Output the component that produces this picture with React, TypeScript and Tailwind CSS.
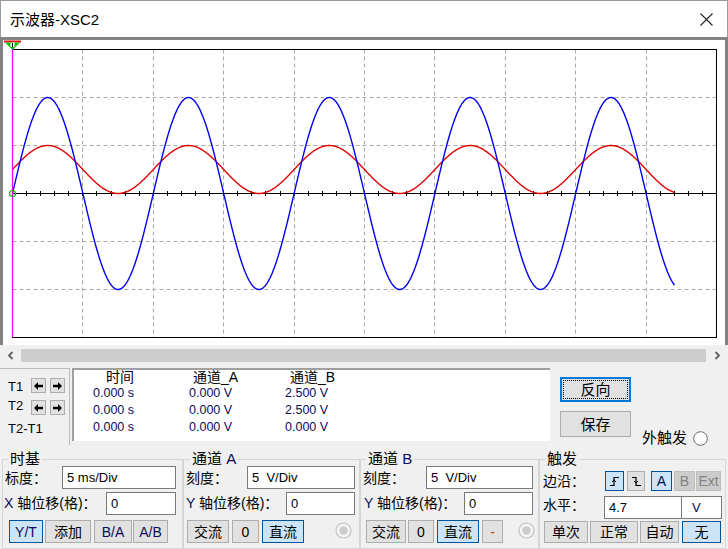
import React from 'react';

// plot geometry, page coordinates
const X0 = 12.5;
const X1 = 716.5;
const Y0 = 49.5;
const Y1 = 337.5;
const CY = 193.5;
const DIVX = 70.4;
const DIVY = 48;
const PERIOD = 140.8;
const XEND = 674.5;

function wave(amp: number, offset: number) {
  const pts: string[] = [];
  for (let x = X0; x <= XEND; x += 0.5) {
    const y = CY - offset - amp * Math.sin((2 * Math.PI * (x - X0)) / PERIOD);
    pts.push(`${x.toFixed(1)},${y.toFixed(1)}`);
  }
  return pts.join(' ');
}

function Plot() {
  const vlines = Array.from({ length: 9 }, (_, i) => Math.round(X0 + (i + 1) * DIVX - 0.5) + 0.5);
  const hlines = [1, 2, 4, 5].map((k) => Y0 + k * DIVY);
  const ticks = Array.from({ length: 51 }, (_, i) => Math.round(X0 + i * (DIVX / 5) - 0.5) + 0.5);
  return (
    <svg width="722" height="305" viewBox="3 40 722 305" className="block">
      {vlines.map((x) => (
        <line key={x} x1={x} y1={Y0} x2={x} y2={Y1} stroke="#a8a8a8" strokeDasharray="4 3" />
      ))}
      {hlines.map((y) => (
        <line key={y} x1={X0} y1={y} x2={X1} y2={y} stroke="#a8a8a8" strokeDasharray="4 3" />
      ))}
      <rect x={X0} y={Y0} width={X1 - X0} height={Y1 - Y0} fill="none" stroke="#000" />
      <line x1={X0} y1={CY} x2={X1} y2={CY} stroke="#000" />
      {ticks.map((x) => (
        <line key={x} x1={x} y1={CY - 2.5} x2={x} y2={CY + 2.5} stroke="#000" />
      ))}
      <polyline points={wave(24, 24)} fill="none" stroke="#e00000" strokeWidth="1.4" />
      <polyline points={wave(96, 0)} fill="none" stroke="#0000f0" strokeWidth="1.4" />
      <line x1={X0} y1={Y0} x2={X0} y2={Y1} stroke="#ff00ff" strokeWidth="1.3" />
      <circle cx={X0} cy={CY} r="3" fill="none" stroke="#00c000" strokeWidth="1.2" />
      {/* cursor marker */}
      <rect x="4" y="40.5" width="17" height="2" fill="#e01010" />
      <polygon points="5,42.5 20,42.5 12.5,50" fill="#10c010" />
      <rect x="10.5" y="42.5" width="4" height="4.5" fill="#fff" />
      <line x1="12.5" y1="43" x2="12.5" y2="47" stroke="#000" />
    </svg>
  );
}

function Btn({ className, sel, dis, children }: { className: string; sel?: boolean; dis?: boolean; children: React.ReactNode }) {
  const tone = sel
    ? 'bg-[#cce4f7] border-[#005499]'
    : dis
      ? 'bg-[#cccccc] border-[#bfbfbf] text-[#838383]'
      : 'bg-[#e1e1e1] border-[#adadad]';
  return <div className={`flex items-center justify-center border text-[14px] leading-none shrink-0 ${tone} ${className}`}>{children}</div>;
}

function Field({ className, children }: { className: string; children: React.ReactNode }) {
  return (
    <div className={`h-[23px] bg-white border border-[#7a7a7a] flex items-center pl-[4px] text-[13px] shrink-0 ${className}`}>{children}</div>
  );
}

function Radio({ off }: { off?: boolean }) {
  return off ? (
    <svg width="17" height="17" viewBox="0 0 17 17" className="shrink-0">
      <circle cx="8.5" cy="8.5" r="7.5" fill="#f4f4f4" stroke="#c2c2c2" strokeWidth="1.2" />
      <circle cx="8.5" cy="8.5" r="4.2" fill="#cccccc" />
    </svg>
  ) : (
    <svg width="15" height="15" viewBox="0 0 15 15" className="shrink-0">
      <circle cx="7.5" cy="7.5" r="6.8" fill="#fff" stroke="#6a6a6a" strokeWidth="1" />
    </svg>
  );
}

function Arrow({ left }: { left?: boolean }) {
  return (
    <div className="w-[15px] h-[15px] bg-[#e1e1e1] border border-[#adadad] flex items-center justify-center">
      <svg width="9" height="8" viewBox="0 0 9 8" className={left ? '' : 'rotate-180'}>
        <path d="M0 4 L4 0 V2.8 H9 V5.2 H4 V8 Z" fill="#000" />
      </svg>
    </div>
  );
}

function Chevron({ right }: { right?: boolean }) {
  return (
    <svg width="7" height="9" viewBox="0 0 7 9" className={right ? 'rotate-180' : ''}>
      <path d="M5.5 1 L2 4.5 L5.5 8" fill="none" stroke="#606060" strokeWidth="1.8" />
    </svg>
  );
}

const navy = 'text-[#0b0b58]';

export default function App() {
  const rows = [
    ['0.000 s', '0.000 V', '2.500 V'],
    ['0.000 s', '0.000 V', '2.500 V'],
    ['0.000 s', '0.000 V', '0.000 V'],
  ];
  return (
    <div className="w-[728px] h-[549px] overflow-hidden bg-[#f0f0f0] flex flex-col font-['Liberation_Sans','Noto_Sans_CJK_SC',sans-serif] text-black select-none">
      {/* Title bar */}
      <div className="h-[37px] shrink-0 bg-white border-t border-x border-[#9a9a9a] flex items-center justify-between pl-[9px] pr-[14px]">
        <span className="text-[15px] leading-none">示波器-XSC2</span>
        <svg width="13" height="13" viewBox="0 0 13 13">
          <path d="M0.5 0.5 L12.5 12.5 M12.5 0.5 L0.5 12.5" stroke="#222" strokeWidth="1.1" />
        </svg>
      </div>

      {/* Scope screen */}
      <div className="h-[308px] shrink-0 bg-white border-t-[3px] border-x-[3px] border-[#838383]">
        <Plot />
      </div>

      {/* Horizontal scrollbar */}
      <div className="h-[19px] shrink-0 pt-[2px] flex">
        <div className="w-[21px] flex items-center justify-center">
          <Chevron />
        </div>
        <div className="flex-1 my-[2px] bg-[#cdcdcd]" />
        <div className="w-[22px] flex items-center justify-center">
          <Chevron right />
        </div>
      </div>

      {/* Cursor readout */}
      <div className="mt-[4px] h-[77px] shrink-0 flex">
        <div className="w-[70px] border-t border-r border-[#bcbcbc] flex flex-col text-[13px] leading-[16px]">
          <div className="flex items-center mt-[9px] h-[15px]">
            <span className="w-[31px] pl-[8px] mt-[3px]">T1</span>
            <Arrow left />
            <div className="w-[4px]" />
            <Arrow />
          </div>
          <div className="flex items-center mt-[7px] h-[15px]">
            <span className="w-[31px] pl-[8px] -mt-[3px]">T2</span>
            <Arrow left />
            <div className="w-[4px]" />
            <Arrow />
          </div>
          <span className="pl-[8px] mt-[6px]">T2-T1</span>
        </div>
        <div className="ml-[2px] w-[478px] h-[73px] bg-white border-t-2 border-l-2 border-[#a0a0a0]">
          <div className="flex pl-[19px] text-[14px] leading-[15px]">
            <span className="w-[96px] pl-[13px]">时间</span>
            <span className="w-[96px] pl-[4px]">通道_A</span>
            <span className="w-[96px] pl-[5px]">通道_B</span>
          </div>
          {rows.map((r, i) => (
            <div key={i} className={`flex pl-[19px] text-[12.5px] leading-[17px] ${navy}`}>
              {r.map((c, j) => (
                <span key={j} className="w-[96px]">{c}</span>
              ))}
            </div>
          ))}
        </div>
        <div className="ml-[10px] flex flex-col">
          <div className="mt-[9px] w-[71px] h-[25px] border-2 border-[#0078d7] bg-[#e1e1e1] p-[1px]">
            <div className="w-full h-full border border-dotted border-black flex items-center justify-center text-[15px] leading-none">反向</div>
          </div>
          <Btn className="mt-[9px] w-[71px] h-[26px] text-[15px]">保存</Btn>
        </div>
        <div className="ml-[11px] flex items-end pb-[0px]">
          <span className="text-[15px] leading-[16px] mb-[-1px]">外触发</span>
          <div className="ml-[6px] mb-[-1px]">
            <Radio />
          </div>
        </div>
      </div>

      {/* Settings groups */}
      <div className="h-[104px] shrink-0 flex text-[14px]">
        {/* 时基 */}
        <fieldset className="ml-[2px] mt-[5px] w-[181px] h-[99px] border border-[#d6d6d6]">
          <legend className="ml-[5px] px-[2px] text-[15px] leading-[18px]">时基</legend>
          <div className="flex items-center -mt-[2px] h-[23px]">
            <span className="w-[59px] pl-[2px] mt-[2px]">标度：</span>
            <Field className="w-[114px]">5 ms/Div</Field>
          </div>
          <div className="flex items-center mt-[3px] h-[23px]">
            <span className="w-[103px] pl-[1px] whitespace-nowrap overflow-visible">
              <span className={navy}>X</span> 轴位移(格)：
            </span>
            <Field className="w-[70px]">0</Field>
          </div>
          <div className="flex mt-[5px] h-[23px]">
            <Btn sel className={`ml-[6px] w-[34px] h-[23px] ${navy}`}>Y/T</Btn>
            <Btn className="ml-[2px] w-[46px] h-[23px]">添加</Btn>
            <Btn className={`ml-[3px] w-[38px] h-[23px] ${navy}`}>B/A</Btn>
            <Btn className={`ml-[1px] w-[35px] h-[23px] ${navy}`}>A/B</Btn>
          </div>
        </fieldset>

        {/* 通道 A */}
        <fieldset className="mt-[5px] w-[177px] h-[99px] border border-[#d6d6d6]">
          <legend className="ml-[6px] px-[2px] text-[15px] leading-[18px]">
            通道 <span className={navy}>A</span>
          </legend>
          <div className="flex items-center -mt-[2px] h-[23px]">
            <span className="w-[63px] pl-[2px] mt-[2px]">刻度：</span>
            <Field className="w-[108px]">5&nbsp; V/Div</Field>
          </div>
          <div className="flex items-center mt-[3px] h-[23px]">
            <span className="w-[102px] pl-[2px] whitespace-nowrap">
              <span className={navy}>Y</span> 轴位移(格)：
            </span>
            <Field className="w-[69px]">0</Field>
          </div>
          <div className="flex items-center mt-[5px] h-[23px]">
            <Btn className="ml-[3px] w-[42px] h-[23px]">交流</Btn>
            <Btn className="ml-[3px] w-[27px] h-[23px]">0</Btn>
            <Btn sel className="ml-[3px] w-[42px] h-[23px]">直流</Btn>
            <div className="ml-[31px] mt-[-2px]">
              <Radio off />
            </div>
          </div>
        </fieldset>

        {/* 通道 B */}
        <fieldset className="mt-[5px] w-[179px] h-[99px] border border-[#d6d6d6]">
          <legend className="ml-[5px] px-[2px] text-[15px] leading-[18px]">
            通道 <span className={navy}>B</span>
          </legend>
          <div className="flex items-center -mt-[2px] h-[23px]">
            <span className="w-[65px] pl-[2px] mt-[2px]">刻度：</span>
            <Field className="w-[107px]">5&nbsp; V/Div</Field>
          </div>
          <div className="flex items-center mt-[3px] h-[23px]">
            <span className="w-[103px] pl-[3px] whitespace-nowrap">
              <span className={navy}>Y</span> 轴位移(格)：
            </span>
            <Field className="w-[69px]">0</Field>
          </div>
          <div className="flex items-center mt-[5px] h-[23px]">
            <Btn className="ml-[5px] w-[40px] h-[23px]">交流</Btn>
            <Btn className="ml-[2px] w-[26px] h-[23px]">0</Btn>
            <Btn sel className="ml-[3px] w-[42px] h-[23px]">直流</Btn>
            <Btn className="ml-[3px] w-[21px] h-[23px] text-[#c04000]">-</Btn>
            <div className="ml-[15px] mt-[-2px]">
              <Radio off />
            </div>
          </div>
        </fieldset>

        {/* 触发 */}
        <fieldset className="mt-[5px] w-[187px] h-[99px] border border-[#d6d6d6]">
          <legend className="ml-[5px] px-[2px] text-[15px] leading-[18px]">触发</legend>
          <div className="flex items-center mt-[3px] h-[20px]">
            <span className="w-[65px] pl-[3px]">边沿：</span>
            <Btn sel className="w-[19px] h-[20px]">
              <svg width="11" height="11" viewBox="0 0 11 11">
                <path d="M1 9.5 H5 V1.5 H10" fill="none" stroke="#000" strokeWidth="1.2" />
                <path d="M3.2 6 L5 3.8 L6.8 6" fill="none" stroke="#000" strokeWidth="1" />
              </svg>
            </Btn>
            <Btn className="ml-[3px] w-[18px] h-[20px]">
              <svg width="11" height="11" viewBox="0 0 11 11">
                <path d="M1 1.5 H5 V9.5 H10" fill="none" stroke="#000" strokeWidth="1.2" />
                <path d="M3.2 5 L5 7.2 L6.8 5" fill="none" stroke="#000" strokeWidth="1" />
              </svg>
            </Btn>
            <Btn sel className={`ml-[6px] w-[21px] h-[20px] ${navy}`}>A</Btn>
            <Btn dis className="ml-[2px] w-[21px] h-[20px]">B</Btn>
            <Btn dis className="ml-[1px] w-[25px] h-[20px] text-[13px]">Ext</Btn>
          </div>
          <div className="flex items-center mt-[5px] h-[23px]">
            <span className="w-[64px] pl-[3px] -mt-[4px]">水平：</span>
            <Field className="w-[78px]">4.7</Field>
            <Field className={`-ml-px w-[41px] pl-[10px] ${navy}`}>V</Field>
          </div>
          <div className="flex mt-[2px] h-[22px]">
            <Btn className="ml-[4px] w-[44px] h-[22px]">单次</Btn>
            <Btn className="ml-[2px] w-[48px] h-[22px]">正常</Btn>
            <Btn className="ml-[2px] w-[39px] h-[22px]">自动</Btn>
            <Btn sel className="ml-[3px] w-[39px] h-[22px]">无</Btn>
          </div>
        </fieldset>
      </div>
    </div>
  );
}
